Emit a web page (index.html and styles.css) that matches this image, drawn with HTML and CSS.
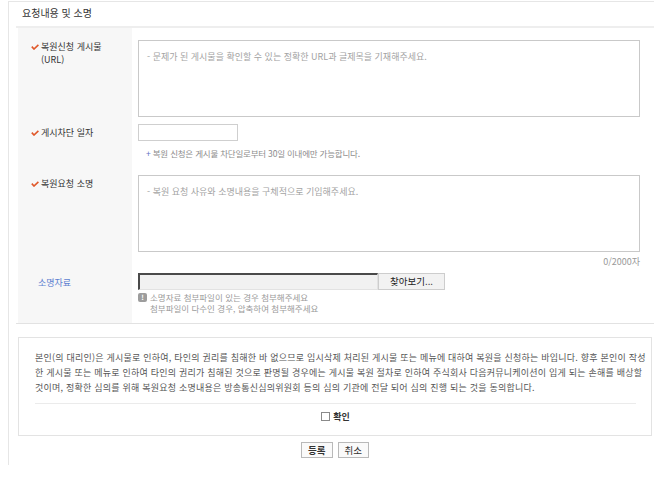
FILE: index.html
```html
<!DOCTYPE html>
<html lang="ko">
<head>
    <meta charset="UTF-8">
    <title>요청내용 및 소명</title>
    <link rel="stylesheet" href="styles.css">
</head>
<body>
    <div class="page">
        <h2 class="sec-title">요청내용 및 소명</h2>

        <div class="form">
            <div class="row row-url">
                <div class="label">
                    <svg class="chk" width="8" height="6" viewBox="0 0 8 6"><polyline points="0.8,2.6 3,5 7.4,0.8" fill="none" stroke="#e0582a" stroke-width="1.6"/></svg>
                    <span>복원신청 게시물<br>(URL)</span>
                </div>
                <div class="field">
                    <textarea class="area" placeholder="- 문제가 된 게시물을 확인할 수 있는 정확한 URL과 글제목을 기재해주세요."></textarea>
                </div>
            </div>

            <div class="row row-date">
                <div class="label">
                    <svg class="chk" width="8" height="6" viewBox="0 0 8 6"><polyline points="0.8,2.6 3,5 7.4,0.8" fill="none" stroke="#e0582a" stroke-width="1.6"/></svg>
                    <span>게시차단 일자</span>
                </div>
                <div class="field">
                    <input type="text" class="date">
                    <p class="hint"><span class="plus">+</span> 복원 신청은 게시물 차단일로부터 30일 이내에만 가능합니다.</p>
                </div>
            </div>

            <div class="row row-reason">
                <div class="label">
                    <svg class="chk" width="8" height="6" viewBox="0 0 8 6"><polyline points="0.8,2.6 3,5 7.4,0.8" fill="none" stroke="#e0582a" stroke-width="1.6"/></svg>
                    <span>복원요청 소명</span>
                </div>
                <div class="field">
                    <textarea class="area" placeholder="- 복원 요청 사유와 소명내용을 구체적으로 기입해주세요."></textarea>
                    <p class="count">0/2000자</p>
                </div>
            </div>

            <div class="row row-file">
                <div class="label label-plain">소명자료</div>
                <div class="field">
                    <div class="file">
                        <span class="file-path"></span>
                        <span class="file-btn">찾아보기...</span>
                    </div>
                    <div class="note">
                        <span class="note-icon">!</span>
                        <p>소명자료 첨부파일이 있는 경우 첨부해주세요<br>첨부파일이 다수인 경우, 압축하여 첨부해주세요</p>
                    </div>
                </div>
            </div>
        </div>

        <div class="agree">
            <p class="agree-text">본인(의 대리인)은 게시물로 인하여, 타인의 권리를 침해한 바 없으므로 임시삭제 처리된 게시물 또는 메뉴에 대하여 복원을 신청하는 바입니다. 향후 본인이 작성<br>한 게시물 또는 메뉴로 인하여 타인의 권리가 침해된 것으로 판명될 경우에는 게시물 복원 절차로 인하여 주식회사 다음커뮤니케이션이 입게 되는 손해를 배상할<br>것이며, 정확한 심의를 위해 복원요청 소명내용은 방송통신심의위원회 등의 심의 기관에 전달 되어 심의 진행 되는 것을 동의합니다.</p>
            <label class="confirm"><input type="checkbox" class="box"> 확인</label>
        </div>

        <div class="actions">
            <button class="btn btn-ok">등록</button>
            <button class="btn">취소</button>
        </div>
    </div>
</body>
</html>
```

FILE: styles.css
```css
* {
    box-sizing: border-box;
}
body {
    margin: 0;
    font-family: "Noto Sans CJK KR", "Noto Sans", sans-serif;
    font-size: 9px;
    color: #666;
    background: #fff;
}
p {
    margin: 0;
}
.page {
    width: 646px;
    margin: 1px 0 0 8px;
    padding: 0 0 7px 7px;
    border-top: 1px solid #e6e6e6;
    border-left: 1px solid #e6e6e6;
}
.sec-title {
    margin: 0;
    height: 26px;
    padding-left: 6px;
    line-height: 22px;
    font-size: 10px;
    font-weight: normal;
    color: #333;
    border-bottom: 2px solid #eeeeee;
}

/* form rows */
.form {
    padding: 0 14px 0 2px;
    border-bottom: 1px solid #e2e2e2;
}
.row {
    display: grid;
    grid-template-columns: 114px 1fr;
    column-gap: 6px;
}
.label {
    display: flex;
    align-items: flex-start;
    background: #f7f7f7;
    padding-left: 13px;
    line-height: 13px;
    color: #333;
}
.chk {
    flex: none;
    margin: 4px 2px 0 0;
}
.row-url .label { padding-top: 12px; }
.row-url .field { padding: 12px 0 7px; }
.row-date .label { padding-top: 2px; }
.row-date .field { padding-bottom: 16px; }
.row-reason .label { padding-top: 2px; }
.row-reason .field { padding-bottom: 5px; }
.row-file .field { padding-bottom: 9px; }
.label-plain {
    padding: 3px 0 0 20px;
    color: #5d7fd0;
}

.area {
    display: block;
    width: 100%;
    height: 77px;
    margin: 0;
    padding: 9px 8px;
    border: 1px solid #c9c9c9;
    resize: none;
    font-family: inherit;
    font-size: 9px;
    line-height: 13px;
    color: #555;
}
.area::placeholder {
    color: #a3a3a3;
}
.date {
    display: block;
    width: 100px;
    height: 17px;
    margin: 0;
    border: 1px solid #cfcfcf;
}
.hint {
    margin-top: 6px;
    padding-left: 8px;
    line-height: 12px;
    font-size: 8.5px;
    letter-spacing: -0.2px;
    color: #8c8c8c;
}
.plus {
    color: #6470c4;
}
.count {
    margin-top: 4px;
    line-height: 12px;
    text-align: right;
    color: #999;
}

/* file attach */
.file {
    display: flex;
    height: 17px;
}
.file-path {
    width: 240px;
    background: #f1f1f1;
    border-top: 2px solid #4a4a4a;
    border-left: 2px solid #4a4a4a;
    border-right: 1px solid #e2e2e2;
    border-bottom: 1px solid #e2e2e2;
}
.file-btn {
    width: 67px;
    background: #f2f2f2;
    border: 1px solid #cdcdcd;
    text-align: center;
    line-height: 15px;
    font-size: 9.5px;
    color: #222;
}
.note {
    display: flex;
    margin-top: 2px;
    line-height: 11px;
    color: #9a9a9a;
    font-size: 8.5px;
}
.note-icon {
    flex: none;
    width: 9px;
    height: 9px;
    margin: 1px 3px 0 0;
    border-radius: 2px;
    background: #9d9d9d;
    color: #fff;
    font-size: 7px;
    font-weight: bold;
    line-height: 9px;
    text-align: center;
}

/* agreement */
.agree {
    margin: 13px 2px 0 2px;
    padding: 12px 15px 0 16px;
    border: 1px solid #e3e3e3;
}
.agree-text {
    line-height: 15px;
    padding-bottom: 8px;
    letter-spacing: 0.22px;
    white-space: nowrap;
    color: #555;
}
.confirm {
    display: flex;
    justify-content: center;
    align-items: center;
    gap: 3px;
    height: 32px;
    padding-bottom: 7px;
    border-top: 1px solid #ebebeb;
    font-weight: bold;
    color: #333;
}
.box {
    appearance: none;
    width: 9px;
    height: 9px;
    margin: 0;
    border: 1px solid #8a8a8a;
    background: #fff;
}

.actions {
    display: flex;
    justify-content: center;
    gap: 5px;
    margin-top: 6px;
}
.btn {
    height: 16px;
    padding: 0 6px;
    border: 1px solid #b9b9b9;
    background: #fafafa;
    font-family: inherit;
    font-size: 9.5px;
    line-height: 14px;
    color: #333;
}
.btn-ok {
    font-weight: bold;
}
```
